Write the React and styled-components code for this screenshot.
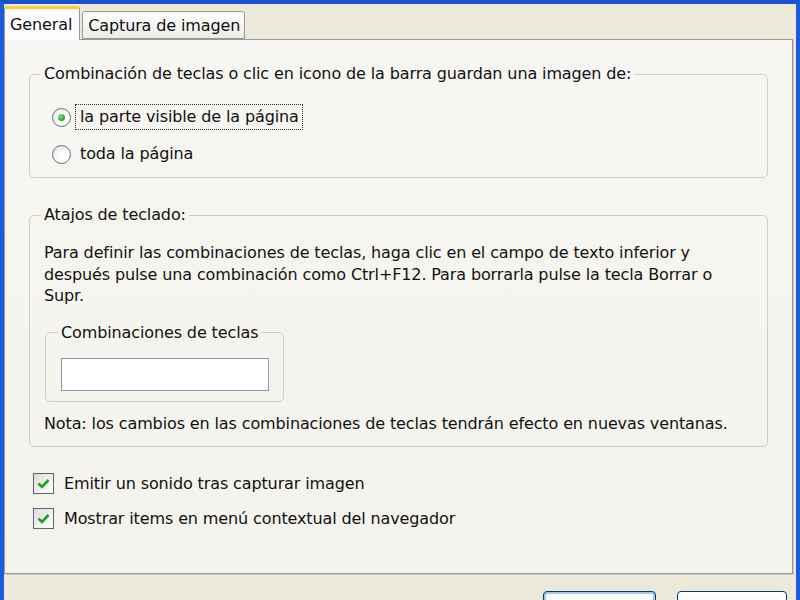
import styled, { createGlobalStyle } from 'styled-components';

const GlobalStyle = createGlobalStyle`
    html, body {
        margin: 0;
        padding: 0;
        overflow: hidden;
    }
    body {
        font-family: "DejaVu Sans", "Liberation Sans", sans-serif;
        font-size: 16px;
        letter-spacing: -0.12px;
        color: #111;
    }
`;

const Window = styled.div`
    width: 800px;
    height: 600px;
    box-sizing: border-box;
    background: #ece9d8;
    border-top: 4px solid #1a4fd0;
    border-left: 4px solid #1d5bdc;
    border-right: 4px solid #1d5bdc;
    display: flex;
    flex-direction: column;
    overflow: hidden;
`;

const TabStrip = styled.div`
    height: 34px;
    flex-shrink: 0;
    display: flex;
    align-items: flex-end;
    padding-top: 1px;
`;

const Tab = styled.div`
    box-sizing: border-box;
    height: ${p => p.$active ? '34px' : '28px'};
    margin-left: ${p => p.$active ? '0' : '2px'};
    margin-bottom: ${p => p.$active ? '-1px' : '0'};
    padding: ${p => p.$active ? '0 7px 0 5px' : '0 4px 0 5px'};
    display: flex;
    align-items: center;
    background: ${p => p.$active ? '#fcfcfe' : 'linear-gradient(#ffffff, #ecebe6)'};
    border: 1px solid #919b9c;
    border-bottom: ${p => p.$active ? 'none' : '1px solid #919b9c'};
    border-top: ${p => p.$active ? '3px solid #ffc83c' : '1px solid #919b9c'};
    border-radius: 3px 3px 0 0;
    position: relative;
    z-index: ${p => p.$active ? 2 : 1};
    white-space: nowrap;
`;

const Panel = styled.div`
    box-sizing: border-box;
    height: 535px;
    flex-shrink: 0;
    margin-right: 3px;
    padding: 0 24px;
    background: linear-gradient(#f7f6f2, #f3f2ec);
    border: 1px solid #919b9c;
    box-shadow: 1px 1px 0 #d0cdc0;
    display: flex;
    flex-direction: column;
`;

const Group = styled.fieldset`
    margin: ${p => p.$top}px 0 0 ${p => p.$left || 0}px;
    padding: 0;
    border: 1px solid #d0d0bf;
    border-radius: 5px;
    min-width: 0;
    width: ${p => p.$width || 'auto'};
    box-sizing: border-box;
`;

const Legend = styled.legend`
    margin-left: ${p => p.$indent}px;
    padding: 0 3px;
    line-height: 20px;
`;

const GroupBody = styled.div`
    padding: ${p => p.$pad};
`;

const RadioRow = styled.label`
    height: 26px;
    display: flex;
    align-items: center;
    & + & {
        margin-top: 11px;
    }
`;

const Radio = styled.span`
    width: 19px;
    height: 19px;
    box-sizing: border-box;
    border-radius: 50%;
    border: 1px solid #5f7488;
    background: radial-gradient(circle at 65% 65%, #ffffff 30%, #dcdcd7 100%);
    display: flex;
    align-items: center;
    justify-content: center;

    &::after {
        content: '';
        width: 7px;
        height: 7px;
        border-radius: 50%;
        background: radial-gradient(circle at 35% 35%, #7fe07f, #21a121 70%);
        display: ${p => p.$checked ? 'block' : 'none'};
    }
`;

const RadioText = styled.span`
    margin-left: 4px;
    padding: 2px 3px 3px 4px;
    border: 1px dotted ${p => p.$focus ? '#333' : 'transparent'};
`;

const Paragraph = styled.p`
    margin: ${p => p.$top}px 0 0 0;
    line-height: 21.5px;
`;

const KeyInput = styled.input`
    display: block;
    box-sizing: border-box;
    width: 208px;
    height: 33px;
    margin: 15px 0 0 15px;
    border: 1px solid #8898a8;
    background: #fff;
    outline: none;
`;

const CheckRow = styled.label`
    height: 24px;
    margin: ${p => p.$top}px 0 0 4px;
    display: flex;
    align-items: center;
`;

const CheckBox = styled.span`
    width: 21px;
    height: 21px;
    box-sizing: border-box;
    border: 1px solid #55697c;
    background: linear-gradient(135deg, #dcdcd7, #ffffff);
    display: flex;
    align-items: center;
    justify-content: center;
    margin-right: 10px;
`;

const ButtonRow = styled.div`
    flex-shrink: 0;
    display: flex;
    justify-content: flex-end;
    gap: 21px;
    margin: 17px 9px 0 0;
`;

const Button = styled.button`
    width: ${p => p.$w}px;
    height: 36px;
    box-sizing: border-box;
    border: 1px solid #003c74;
    border-radius: 4px;
    background: linear-gradient(#ffffff, #ecebe6 85%, #d6d0c5);
    box-shadow: inset 0 0 0 2px ${p => p.$default ? '#a9c4ec' : 'transparent'};
    font: inherit;
    color: #111;
    padding-top: 8px;
`;

const Check = () => (
    <svg width="13" height="11" viewBox="0 0 13 11">
        <path d="M1.5 5.5 L5 9 L11.5 2" fill="none" stroke="#21a121" strokeWidth="2.6" />
    </svg>
);

const App = () => {
    return (
        <Window>
            <GlobalStyle />
            <TabStrip>
                <Tab $active>General</Tab>
                <Tab>Captura de imagen</Tab>
            </TabStrip>
            <Panel>
                <Group $top={24}>
                    <Legend $indent={11}>Combinación de teclas o clic en icono de la barra guardan una imagen de:</Legend>
                    <GroupBody $pad="20px 0 10px 22px">
                        <RadioRow>
                            <Radio $checked />
                            <RadioText $focus>la parte visible de la página</RadioText>
                        </RadioRow>
                        <RadioRow>
                            <Radio />
                            <RadioText>toda la página</RadioText>
                        </RadioRow>
                    </GroupBody>
                </Group>
                <Group $top={27}>
                    <Legend $indent={11}>Atajos de teclado:</Legend>
                    <GroupBody $pad="0 14px 12px 14px">
                        <Paragraph $top={17}>
                            Para definir las combinaciones de teclas, haga clic en el campo de texto inferior y<br />
                            después pulse una combinación como Ctrl+F12. Para borrarla pulse la tecla Borrar o<br />
                            Supr.
                        </Paragraph>
                        <Group $top={16} $left={1} $width="239px">
                            <Legend $indent={12}>Combinaciones de teclas</Legend>
                            <GroupBody $pad="0 0 10px 0">
                                <KeyInput type="text" />
                            </GroupBody>
                        </Group>
                        <Paragraph $top={11}>
                            Nota: los cambios en las combinaciones de teclas tendrán efecto en nuevas ventanas.
                        </Paragraph>
                    </GroupBody>
                </Group>
                <CheckRow $top={24}>
                    <CheckBox><Check /></CheckBox>
                    Emitir un sonido tras capturar imagen
                </CheckRow>
                <CheckRow $top={11}>
                    <CheckBox><Check /></CheckBox>
                    Mostrar items en menú contextual del navegador
                </CheckRow>
            </Panel>
            <ButtonRow>
                <Button $w={113} $default>Aceptar</Button>
                <Button $w={110}>Cancelar</Button>
            </ButtonRow>
        </Window>
    );
};

export default App;
